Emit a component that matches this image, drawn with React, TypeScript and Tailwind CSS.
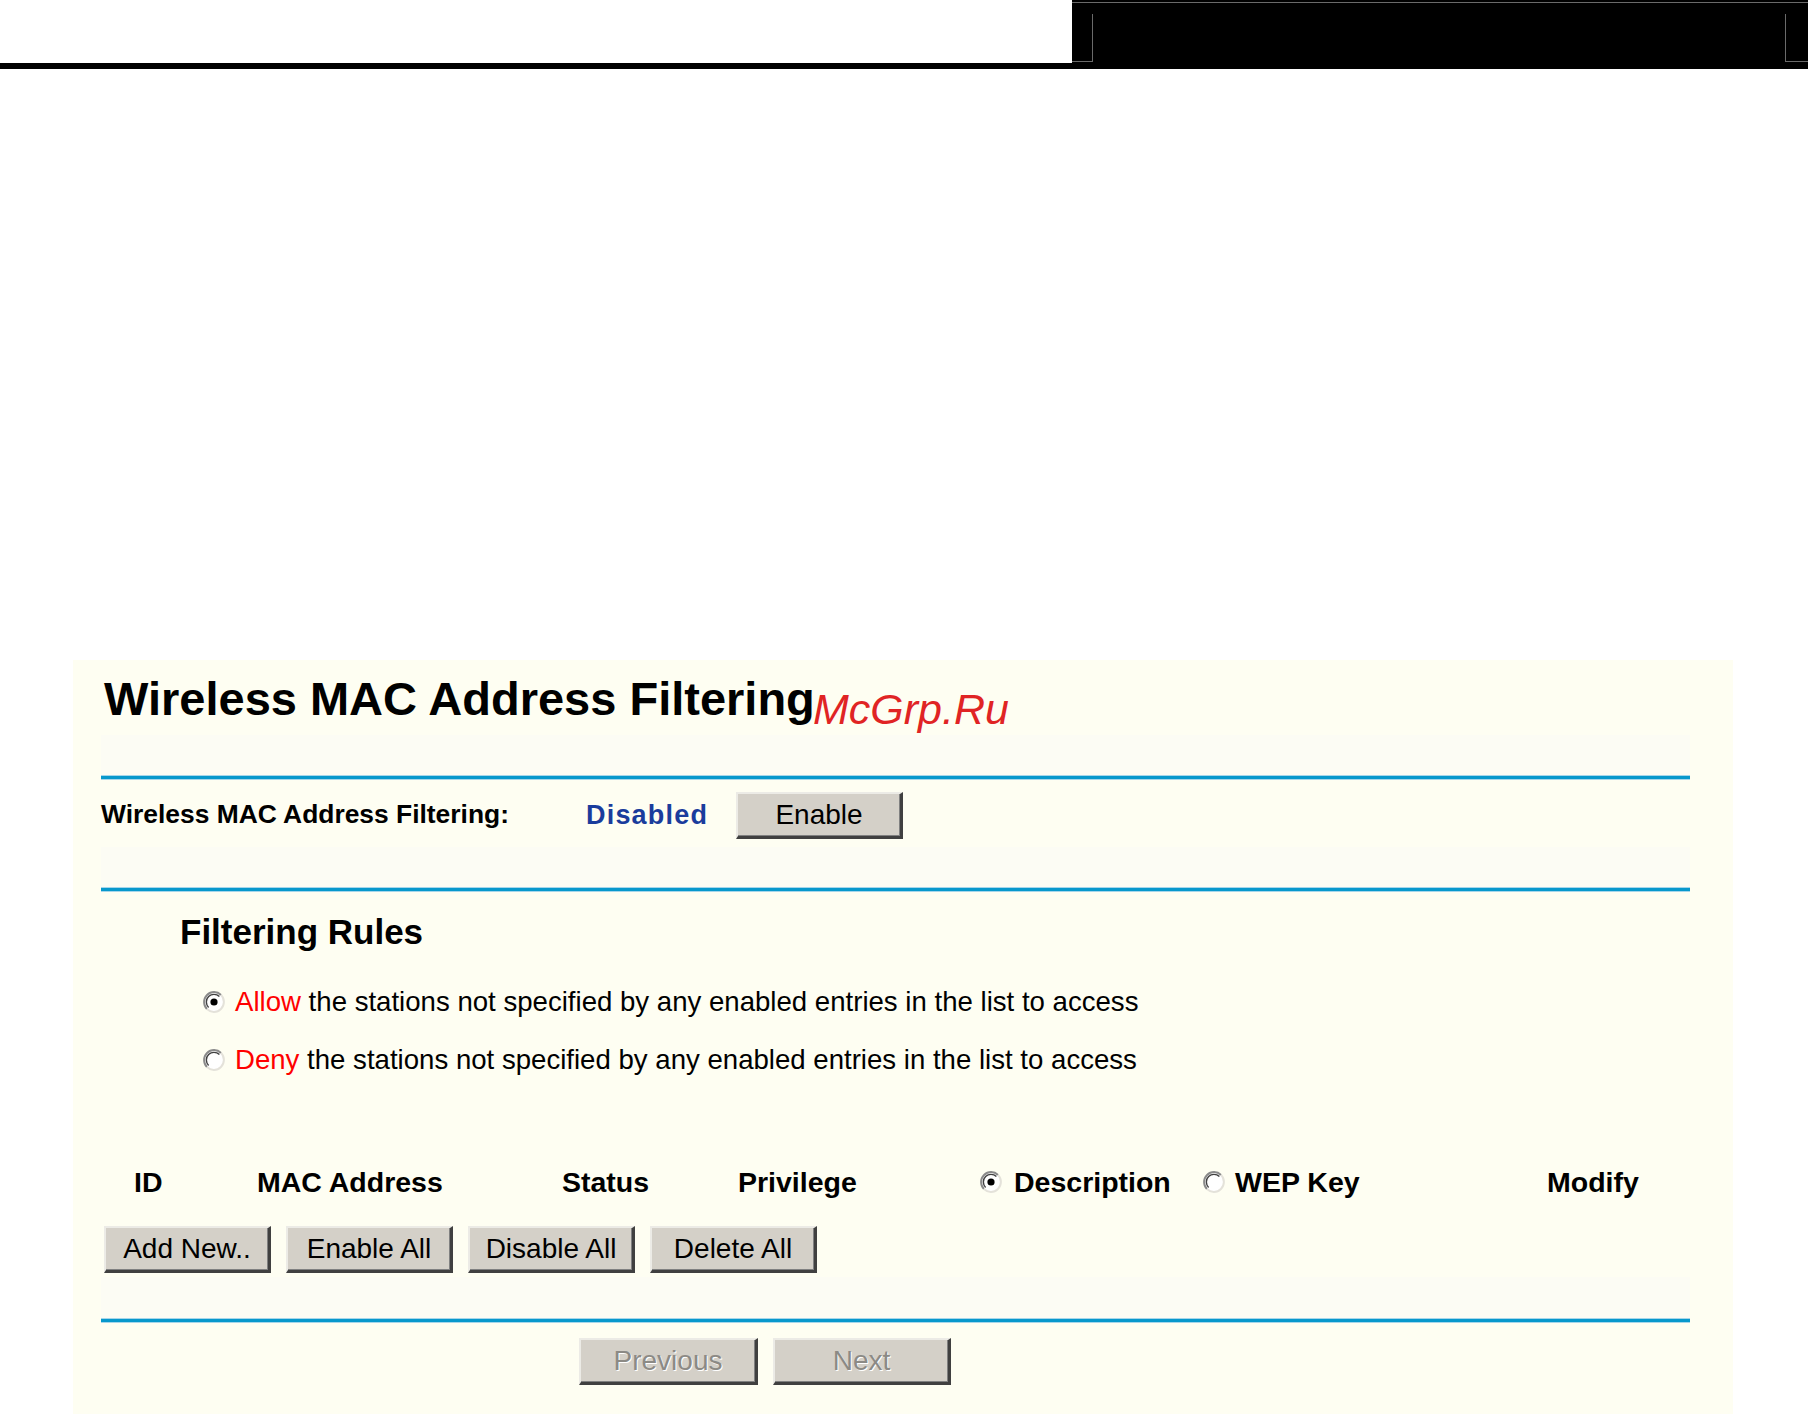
import React from "react";

function Radio({ checked }: { checked?: boolean }) {
  return (
    <svg width="22" height="22" viewBox="0 0 22 22" className="shrink-0">
      <circle cx="11" cy="11" r="10" fill="#ffffff" />
      <path d="M3.93 18.07 A10 10 0 0 1 18.07 3.93" stroke="#8a8a8a" strokeWidth="2" fill="none" />
      <path d="M18.07 3.93 A10 10 0 0 1 3.93 18.07" stroke="#e4e2da" strokeWidth="2" fill="none" />
      <path d="M5.6 16.4 A7.6 7.6 0 0 1 16.4 5.6" stroke="#404040" strokeWidth="1.4" fill="none" />
      {checked && <circle cx="11" cy="11" r="3.6" fill="#000000" />}
    </svg>
  );
}

function Btn({ children, w, disabled }: { children: React.ReactNode; w: string; disabled?: boolean }) {
  return (
    <div
      className={`${w} h-[47px] shrink-0 flex items-center justify-center bg-[#d4d0c8] border-t-2 border-l-2 border-r-[3px] border-b-[3px] border-t-[#ecebe6] border-l-[#ecebe6] border-r-[#404040] border-b-[#404040] shadow-[inset_-1px_-1px_0_#808080] text-[28px] leading-none ${
        disabled ? "text-[#8c8a85] [text-shadow:1px_1px_0_#ffffff]" : "text-black"
      }`}
    >
      {children}
    </div>
  );
}

function BlueLine() {
  return <div className="h-[5px] w-[1589px] bg-[#0798cc] border-y border-[#a6d6ea]" />;
}

export default function App() {
  return (
    <div className="relative w-[1808px] h-[1414px] overflow-hidden bg-white font-['Liberation_Sans',Arial,sans-serif] text-black">
      {/* Header */}
      <div className="flex h-[63px]">
        <div className="w-[1072px] bg-white" />
        <div className="relative flex-1 bg-black">
          <div className="absolute left-0 right-0 top-[2px] h-px bg-[#6a6a6a]" />
          <div className="absolute left-[20px] top-[14px] bottom-px w-px bg-[#6a6a6a]" />
          <div className="absolute left-0 w-[20px] bottom-px h-px bg-[#6a6a6a]" />
          <div className="absolute left-[713px] top-[14px] bottom-px w-px bg-[#6a6a6a]" />
          <div className="absolute left-[713px] right-0 bottom-px h-px bg-[#6a6a6a]" />
        </div>
      </div>
      <div className="h-[6px] bg-black" />

      {/* Panel */}
      <div className="relative ml-[73px] mt-[591px] w-[1660px] h-[754px] bg-[#fefef2] pl-[28px] pt-[8px]">
        <div className="pl-[3px] h-[61px] leading-[61px] text-[47px] font-bold whitespace-nowrap">
          Wireless MAC Address Filtering
        </div>
        <div className="absolute left-[740px] top-[19px] text-[43px] italic leading-[60px] text-[#e02424] whitespace-nowrap">
          McGrp.Ru
        </div>
        <div className="mt-[6px] h-[40px] w-[1589px] bg-[#fcfcf4]" />
        <BlueLine />

        <div className="flex items-center h-[67px] pt-[3px]">
          <div className="w-[485px] text-[26.4px] font-bold whitespace-nowrap">Wireless MAC Address Filtering:</div>
          <div className="w-[150px] text-[27px] font-bold tracking-[1.2px] text-[#1a3c9c]">Disabled</div>
          <Btn w="w-[167px]">Enable</Btn>
        </div>
        <div className="h-[40px] w-[1589px] bg-[#fcfcf4]" />
        <BlueLine />

        <div className="mt-[18px] pl-[79px] h-[44px] leading-[44px] text-[35px] font-bold whitespace-nowrap">
          Filtering Rules
        </div>
        <div className="mt-[28px] pl-[102px] h-[40px] flex items-center gap-[10px] text-[27.6px] whitespace-nowrap">
          <Radio checked />
          <span>
            <span className="text-[#ff0000]">Allow</span> the stations not specified by any enabled entries in the list to access
          </span>
        </div>
        <div className="mt-[18px] pl-[102px] h-[40px] flex items-center gap-[10px] text-[27.6px] whitespace-nowrap">
          <Radio />
          <span>
            <span className="text-[#ff0000]">Deny</span> the stations not specified by any enabled entries in the list to access
          </span>
        </div>

        <div className="mt-[82px] h-[40px] flex items-center text-[28.5px] font-bold whitespace-nowrap">
          <div className="w-[156px] pl-[33px]">ID</div>
          <div className="w-[305px]">MAC Address</div>
          <div className="w-[176px]">Status</div>
          <div className="w-[242px]">Privilege</div>
          <div className="w-[223px] flex items-center gap-[12px]">
            <Radio checked />
            <span>Description</span>
          </div>
          <div className="w-[344px] flex items-center gap-[10px]">
            <Radio />
            <span>WEP Key</span>
          </div>
          <div>Modify</div>
        </div>

        <div className="mt-[24px] pl-[3px] flex gap-[15px]">
          <Btn w="w-[167px]">Add New..</Btn>
          <Btn w="w-[167px]">Enable All</Btn>
          <Btn w="w-[167px]">Disable All</Btn>
          <Btn w="w-[167px]">Delete All</Btn>
        </div>
        <div className="mt-[4px] h-[41px] w-[1589px] bg-[#fcfcf4]" />
        <BlueLine />

        <div className="mt-[15px] pl-[478px] flex gap-[15px]">
          <Btn w="w-[179px]" disabled>Previous</Btn>
          <Btn w="w-[178px]" disabled>Next</Btn>
        </div>
      </div>
    </div>
  );
}
